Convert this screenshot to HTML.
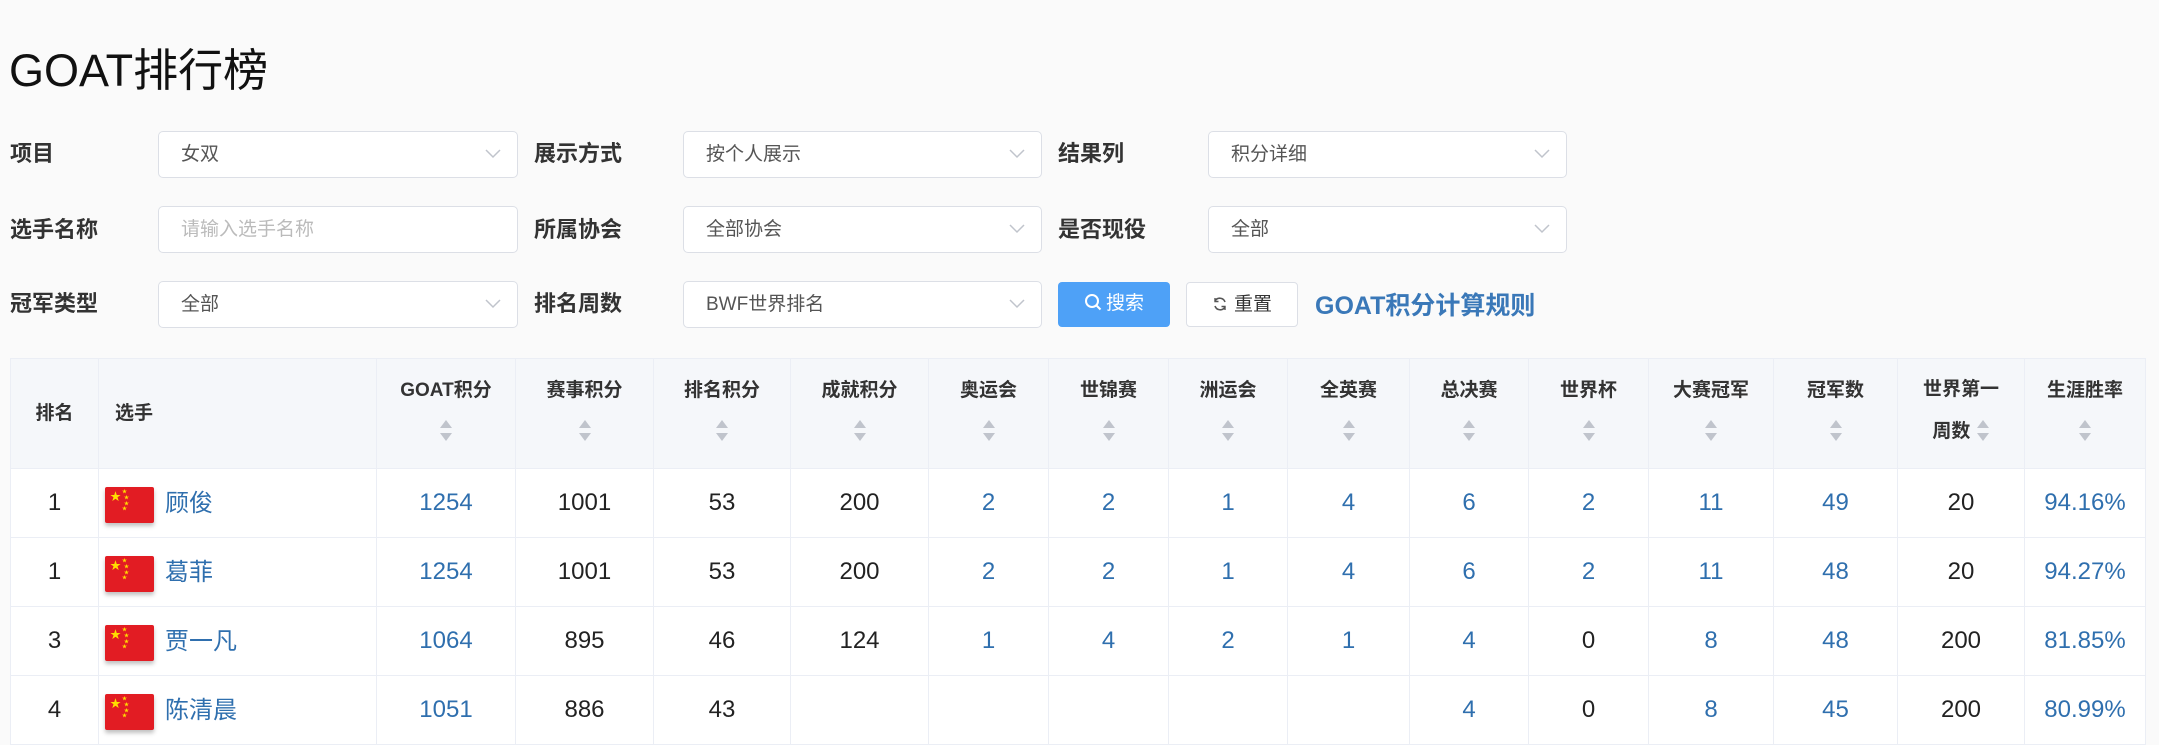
<!DOCTYPE html>
<html><head><meta charset="utf-8"><style>
*{box-sizing:border-box;margin:0;padding:0}
body{width:2159px;height:744px;overflow:hidden;background:#fafafa;font-family:"Liberation Sans","Noto Sans CJK SC",sans-serif;color:#222;position:relative}
.title{position:absolute;left:9px;top:34px;font-size:45px;color:#111;font-weight:400}
.lbl{position:absolute;font-size:22px;font-weight:700;color:#333;line-height:30px}
.sel{position:absolute;height:47px;background:#fff;border:1px solid #dcdfe6;border-radius:5px;font-size:19px;color:#555;line-height:45px;padding-left:22px}
.sel.ph{color:#bbb}
.sel svg{position:absolute;right:16px;top:17px}
.btn{position:absolute;height:45px;border-radius:4px;font-size:19px;line-height:43px;text-align:center}
.link{position:absolute;left:1315px;top:286px;font-size:25px;font-weight:700;color:#3a78b8}
table{position:absolute;left:10px;top:358px;border-collapse:collapse;table-layout:fixed;background:#fff}
td,th{border:1px solid #ebeef5;text-align:center;font-size:24px}
th{background:#f5f7fa;height:110px;font-size:19px;font-weight:700;color:#333;vertical-align:top;padding-top:18px;line-height:28px}
th.mid{vertical-align:middle;padding-top:0}
td{height:69px}
.b{color:#2f6fae}
.ar{display:inline-block;width:14px;height:26px;position:relative;vertical-align:middle}
.ar:before{content:"";position:absolute;left:1px;top:1px;border:6px solid transparent;border-bottom:8px solid #c0c4cc;border-top:0}
.ar:after{content:"";position:absolute;left:1px;top:14px;border:6px solid transparent;border-top:8px solid #c0c4cc;border-bottom:0}
th .ar.d{margin-top:14px}
.flag{display:inline-block;width:49px;height:36px;background:#e21c23;vertical-align:middle;position:relative;box-shadow:0 3px 4px rgba(0,0,0,.25);margin-right:11px;border-radius:2px}
.flag span{position:absolute;color:#ffde00;font-size:11px;line-height:11px}
.flag i{position:absolute;color:#ffde00;font-size:5px;line-height:5px;font-style:normal}
.nm{text-align:left;padding-left:6px}
</style></head><body>
<div class="title">GOAT排行榜</div>

<div class="lbl" style="left:10px;top:139px">项目</div>
<div class="lbl" style="left:10px;top:215px">选手名称</div>
<div class="lbl" style="left:10px;top:289px">冠军类型</div>
<div class="lbl" style="left:534px;top:139px">展示方式</div>
<div class="lbl" style="left:534px;top:215px">所属协会</div>
<div class="lbl" style="left:534px;top:289px">排名周数</div>
<div class="lbl" style="left:1058px;top:139px">结果列</div>
<div class="lbl" style="left:1058px;top:215px">是否现役</div>

<div class="sel" style="left:158px;top:131px;width:360px">女双<svg width="16" height="10"><path d="M1 1l7 7 7-7" fill="none" stroke="#c0c4cc" stroke-width="1.5"/></svg></div>
<div class="sel ph" style="left:158px;top:206px;width:360px">请输入选手名称</div>
<div class="sel" style="left:158px;top:281px;width:360px">全部<svg width="16" height="10"><path d="M1 1l7 7 7-7" fill="none" stroke="#c0c4cc" stroke-width="1.5"/></svg></div>
<div class="sel" style="left:683px;top:131px;width:359px">按个人展示<svg width="16" height="10"><path d="M1 1l7 7 7-7" fill="none" stroke="#c0c4cc" stroke-width="1.5"/></svg></div>
<div class="sel" style="left:683px;top:206px;width:359px">全部协会<svg width="16" height="10"><path d="M1 1l7 7 7-7" fill="none" stroke="#c0c4cc" stroke-width="1.5"/></svg></div>
<div class="sel" style="left:683px;top:281px;width:359px">BWF世界排名<svg width="16" height="10"><path d="M1 1l7 7 7-7" fill="none" stroke="#c0c4cc" stroke-width="1.5"/></svg></div>
<div class="sel" style="left:1208px;top:131px;width:359px">积分详细<svg width="16" height="10"><path d="M1 1l7 7 7-7" fill="none" stroke="#c0c4cc" stroke-width="1.5"/></svg></div>
<div class="sel" style="left:1208px;top:206px;width:359px">全部<svg width="16" height="10"><path d="M1 1l7 7 7-7" fill="none" stroke="#c0c4cc" stroke-width="1.5"/></svg></div>

<div class="btn" style="left:1058px;top:282px;width:112px;background:#4ea1f7;color:#fff"><svg width="18" height="18" style="vertical-align:-2px;margin-right:4px"><circle cx="8" cy="8" r="6" fill="none" stroke="#fff" stroke-width="2"/><path d="M12.5 12.5l4 4" stroke="#fff" stroke-width="2"/></svg>搜索</div>
<div class="btn" style="left:1186px;top:282px;width:112px;background:#fff;border:1px solid #dcdfe6;color:#333"><svg width="16" height="16" style="vertical-align:-2px;margin-right:6px"><path d="M13 6A5.5 5.5 0 0 0 3 5M3 10a5.5 5.5 0 0 0 10 1" fill="none" stroke="#555" stroke-width="1.6"/><path d="M3 2v3.5h3.5M13 14v-3.5H9.5" fill="none" stroke="#555" stroke-width="1.4"/></svg>重置</div>
<div class="link">GOAT积分计算规则</div>

<table>
<colgroup><col style="width:88px"><col style="width:278px"><col style="width:139px"><col style="width:138px"><col style="width:137px"><col style="width:138px"><col style="width:120px"><col style="width:120px"><col style="width:119px"><col style="width:122px"><col style="width:119px"><col style="width:120px"><col style="width:125px"><col style="width:124px"><col style="width:127px"><col style="width:121px"></colgroup>
<tr><th class="mid">排名</th><th class="mid" style="text-align:left;padding-left:16px">选手</th>
<th>GOAT积分<br><span class="ar d"></span></th><th>赛事积分<br><span class="ar d"></span></th><th>排名积分<br><span class="ar d"></span></th><th>成就积分<br><span class="ar d"></span></th><th>奥运会<br><span class="ar d"></span></th><th>世锦赛<br><span class="ar d"></span></th><th>洲运会<br><span class="ar d"></span></th><th>全英赛<br><span class="ar d"></span></th><th>总决赛<br><span class="ar d"></span></th><th>世界杯<br><span class="ar d"></span></th><th>大赛冠军<br><span class="ar d"></span></th><th>冠军数<br><span class="ar d"></span></th><th style="line-height:42px;padding-top:10px">世界第一<br>周数 <span class="ar"></span></th><th>生涯胜率<br><span class="ar d"></span></th></tr>
<tr><td>1</td><td class="nm"><span class="flag"><span style="left:5px;top:5px">★</span><i style="left:17px;top:3px">★</i><i style="left:19px;top:9px">★</i><i style="left:19px;top:15px">★</i><i style="left:17px;top:20px">★</i></span><span class="b">顾俊</span></td><td class="b">1254</td><td>1001</td><td>53</td><td>200</td><td class="b">2</td><td class="b">2</td><td class="b">1</td><td class="b">4</td><td class="b">6</td><td class="b">2</td><td class="b">11</td><td class="b">49</td><td>20</td><td class="b">94.16%</td></tr>
<tr><td>1</td><td class="nm"><span class="flag"><span style="left:5px;top:5px">★</span><i style="left:17px;top:3px">★</i><i style="left:19px;top:9px">★</i><i style="left:19px;top:15px">★</i><i style="left:17px;top:20px">★</i></span><span class="b">葛菲</span></td><td class="b">1254</td><td>1001</td><td>53</td><td>200</td><td class="b">2</td><td class="b">2</td><td class="b">1</td><td class="b">4</td><td class="b">6</td><td class="b">2</td><td class="b">11</td><td class="b">48</td><td>20</td><td class="b">94.27%</td></tr>
<tr><td>3</td><td class="nm"><span class="flag"><span style="left:5px;top:5px">★</span><i style="left:17px;top:3px">★</i><i style="left:19px;top:9px">★</i><i style="left:19px;top:15px">★</i><i style="left:17px;top:20px">★</i></span><span class="b">贾一凡</span></td><td class="b">1064</td><td>895</td><td>46</td><td>124</td><td class="b">1</td><td class="b">4</td><td class="b">2</td><td class="b">1</td><td class="b">4</td><td>0</td><td class="b">8</td><td class="b">48</td><td>200</td><td class="b">81.85%</td></tr>
<tr><td>4</td><td class="nm"><span class="flag"><span style="left:5px;top:5px">★</span><i style="left:17px;top:3px">★</i><i style="left:19px;top:9px">★</i><i style="left:19px;top:15px">★</i><i style="left:17px;top:20px">★</i></span><span class="b">陈清晨</span></td><td class="b">1051</td><td>886</td><td>43</td><td></td><td></td><td></td><td></td><td></td><td class="b">4</td><td>0</td><td class="b">8</td><td class="b">45</td><td>200</td><td class="b">80.99%</td></tr>
</table>
</body></html>
